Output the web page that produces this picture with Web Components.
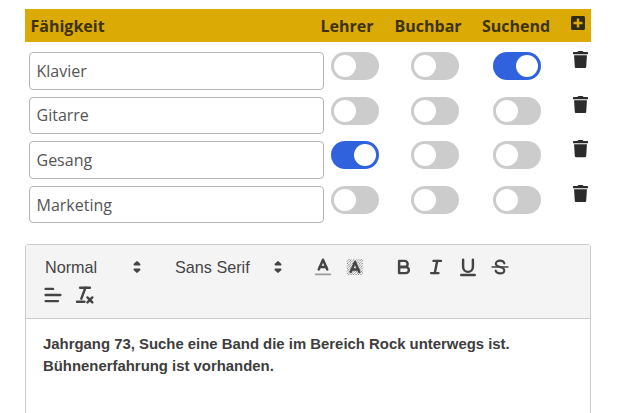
<!DOCTYPE html>
<html lang="de">
<head>
<meta charset="utf-8">
<title>Fähigkeiten</title>
<style>
    html, body {
        margin: 0;
        padding: 0;
        background: #fff;
        overflow: hidden;
    }
</style>
</head>
<body>
<skill-page>
    <skill-table>
        <skill-row name="Klavier" suchend></skill-row>
        <skill-row name="Gitarre"></skill-row>
        <skill-row name="Gesang" lehrer></skill-row>
        <skill-row name="Marketing"></skill-row>
    </skill-table>
    <rich-editor>
        <p>Jahrgang 73, Suche eine Band die im Bereich Rock unterwegs ist.</p>
        <p>Bühnenerfahrung ist vorhanden.</p>
    </rich-editor>
</skill-page>

<script>
class SkillPage extends HTMLElement {
    constructor() {
        super();
        this.attachShadow({mode: 'open'});
        this.shadowRoot.innerHTML = `
            <style>
            :host {
                display: block;
                height: 413px;
                overflow: hidden;
                padding: 9px 29px 0 25px;
                box-sizing: border-box;
            }
            </style>
            <slot></slot>
        `;
    }
}

class SkillTable extends HTMLElement {
    constructor() {
        super();
        this.attachShadow({mode: 'open'});
        this.shadowRoot.innerHTML = `
            <style>
            :host {
                display: block;
                font-family: "Open Sans", sans-serif;
            }
            .head {
                display: grid;
                grid-template-columns: 290px 74px 87.5px 87.5px 15px;
                align-items: center;
                height: 33px;
                padding-left: 5.5px;
                background: #dcaa04;
                color: #3d3210;
                font-size: 16px;
                font-weight: 700;
                white-space: nowrap;
            }
            .head svg {
                display: block;
                width: 14px;
                height: 16px;
                margin: -5px 0 0 1.5px;
                fill: #2f2a14;
            }
            .rows {
                display: flex;
                flex-direction: column;
                gap: 7.17px;
                padding: 10px 0 0 4px;
            }
            </style>
            <div class="head">
                <span>Fähigkeit</span>
                <span>Lehrer</span>
                <span>Buchbar</span>
                <span>Suchend</span>
                <svg viewBox="0 0 448 512"><path d="M400 32H48C21.5 32 0 53.5 0 80v352c0 26.5 21.5 48 48 48h352c26.5 0 48-21.5 48-48V80c0-26.5-21.5-48-48-48zm-32 252c0 6.6-5.4 12-12 12h-92v92c0 6.6-5.4 12-12 12h-56c-6.6 0-12-5.4-12-12v-92H92c-6.6 0-12-5.4-12-12v-56c0-6.6 5.4-12 12-12h92v-92c0-6.6 5.4-12 12-12h56c6.6 0 12 5.4 12 12v92h92c6.6 0 12 5.4 12 12v56z"/></svg>
            </div>
            <div class="rows"><slot></slot></div>
        `;
    }
}

class SkillRow extends HTMLElement {
    constructor() {
        super();
        this.attachShadow({mode: 'open'});
    }

    connectedCallback() {
        this.render();
    }

    render() {
        const on = (name) => this.hasAttribute(name) ? 'checked' : '';
        this.shadowRoot.innerHTML = `
            <style>
            :host {
                display: grid;
                grid-template-columns: 295px 55px 80px 81.5px 47.5px;
                height: 37.5px;
            }
            .name {
                box-sizing: border-box;
                height: 37.5px;
                border: 1.3px solid #b5b5b5;
                border-radius: 4px;
                padding-left: 6.5px;
                display: flex;
                align-items: center;
                color: #555;
                font-size: 16px;
            }
            toggle-switch {
                justify-self: end;
            }
            svg {
                justify-self: end;
                width: 15px;
                height: 17.2px;
                margin-top: -1px;
                fill: #2b2b2b;
            }
            </style>
            <div class="name">${this.getAttribute('name')}</div>
            <toggle-switch ${on('lehrer')}></toggle-switch>
            <toggle-switch ${on('buchbar')}></toggle-switch>
            <toggle-switch ${on('suchend')}></toggle-switch>
            <svg viewBox="0 0 448 512"><path d="M432 32H312l-9.4-18.7A24 24 0 0 0 281.1 0H166.8a23.72 23.72 0 0 0-21.4 13.3L136 32H16A16 16 0 0 0 0 48v32a16 16 0 0 0 16 16h416a16 16 0 0 0 16-16V48a16 16 0 0 0-16-16zM53.2 467a48 48 0 0 0 47.9 45h245.8a48 48 0 0 0 47.9-45L416 128H32z"/></svg>
        `;
    }
}

class ToggleSwitch extends HTMLElement {
    constructor() {
        super();
        this.attachShadow({mode: 'open'});
        this.shadowRoot.innerHTML = `
            <style>
            :host {
                display: flex;
                align-items: center;
                box-sizing: border-box;
                width: 48px;
                height: 28px;
                padding: 0 3px;
                border-radius: 14px;
                background: #ccc;
            }
            :host([checked]) {
                background: #2f62dc;
                justify-content: flex-end;
            }
            i {
                display: block;
                width: 22px;
                height: 22px;
                border-radius: 50%;
                background: #fff;
            }
            </style>
            <i></i>
        `;
    }
}

// diagonal hatch behind the background colour "A"
const hatchLines = () => {
    let lines = '';
    for (let s = 7; s <= 29; s += 2) {
        const x1 = Math.max(2.5, s - 15.5);
        const x2 = Math.min(15.5, s - 2.5);
        lines += `<line x1="${x1}" y1="${s - x1}" x2="${x2}" y2="${s - x2}"/>`;
    }
    return lines;
};

const QL_ICONS = {
    color: '<line x1="3" x2="15" y1="15" y2="15" stroke="#999" stroke-width="1.4"/><polyline points="5.5 11 9 3 12.5 11"/><line x1="11.63" x2="6.38" y1="9" y2="9"/>',
    background: `<g class="hatch">${hatchLines()}</g><polyline points="5.5 13 9 5 12.5 13"/><line x1="11.63" x2="6.38" y1="11" y2="11"/>`,
    bold: '<path d="M5,4H9.5A2.5,2.5,0,0,1,12,6.5v0A2.5,2.5,0,0,1,9.5,9H5V4Z"/><path d="M5,9h5.5A2.5,2.5,0,0,1,13,11.5v0A2.5,2.5,0,0,1,10.5,14H5V9Z"/>',
    italic: '<line x1="7" x2="13" y1="4" y2="4"/><line x1="5" x2="11" y1="14" y2="14"/><line x1="8" x2="10" y1="14" y2="4"/>',
    underline: '<path d="M5,3V9a4,4,0,0,0,4,4H9a4,4,0,0,0,4-4V3"/><rect class="solid" height="1" rx=".5" width="12" x="3" y="15"/>',
    strike: '<line stroke-width="1.2" x1="2.5" x2="15.5" y1="9" y2="9"/><path stroke-width="1.7" d="M12.6,6C12,4.4,10.7,3.8,9,3.8,7,3.8,5.6,4.8,5.6,6.3,5.6,7.6,6.6,8.4,9,9,11.4,9.6,12.5,10.4,12.5,11.8,12.5,13.3,11,14.2,9,14.2,7.2,14.2,5.9,13.5,5.4,12"/>',
    align: '<line x1="3" x2="15" y1="9" y2="9"/><line x1="3" x2="13" y1="14" y2="14"/><line x1="3" x2="9" y1="4" y2="4"/>',
    clean: '<line x1="5" x2="13" y1="3" y2="3"/><line x1="6" x2="9.35" y1="12" y2="3"/><line x1="11" x2="15" y1="11" y2="15"/><line x1="15" x2="11" y1="11" y2="15"/><rect class="solid" height="1" rx=".5" width="7" x="2" y="14"/>',
    arrows: '<polygon class="arrow" points="7 11 9 13 11 11 7 11"/><polygon class="arrow" points="7 7 9 5 11 7 7 7"/>',
};

class RichEditor extends HTMLElement {
    constructor() {
        super();
        this.attachShadow({mode: 'open'});
        const icon = (name) => `<button><svg viewBox="0 0 18 18">${QL_ICONS[name]}</svg></button>`;
        const picker = (label, width) => `
            <span class="picker" style="width:${width}px">${label}<svg viewBox="0 0 18 18">${QL_ICONS.arrows}</svg></span>`;
        this.shadowRoot.innerHTML = `
            <style>
            :host {
                display: block;
                margin-top: 21px;
                height: 200px;
                box-sizing: border-box;
                border: 1px solid #ccc;
                border-radius: 3px 3px 0 0;
                font-family: "Liberation Sans", Arial, sans-serif;
            }
            .toolbar {
                box-sizing: border-box;
                height: 74px;
                padding: 8px 0 0 11px;
                background: #f4f4f4;
                border-bottom: 1px solid #ccc;
                color: #444;
            }
            .line {
                display: flex;
                align-items: center;
                height: 28px;
            }
            button {
                display: block;
                flex: none;
                width: 32px;
                height: 28px;
                padding: 0;
                border: 0;
                background: none;
            }
            button svg {
                margin: 0 auto;
            }
            .picker {
                flex: none;
                display: flex;
                align-items: center;
                justify-content: space-between;
                box-sizing: border-box;
                padding-left: 8px;
                font-size: 16.2px;
            }
            svg {
                display: block;
                width: 22px;
                height: 22px;
                fill: none;
                stroke: #444;
                stroke-width: 2;
                stroke-linecap: round;
                stroke-linejoin: round;
            }
            svg .solid {
                fill: #444;
                stroke-width: 1;
            }
            svg .arrow {
                fill: #444;
                stroke-width: 1.7;
            }
            svg .hatch line {
                stroke: #555;
                stroke-width: .7;
                stroke-linecap: butt;
                stroke-dasharray: 1.2 .6;
            }
            .sp1 { width: 19px; flex: none; }
            .sp2 { width: 17.5px; flex: none; }
            .content {
                padding: 14px 17px;
                color: #3d3d3d;
                font-size: 14.9px;
                font-weight: 700;
                line-height: 22px;
            }
            ::slotted(p) {
                margin: 0;
            }
            </style>
            <div class="toolbar">
                <div class="line">
                    ${picker('Normal', 111)}
                    <span class="sp1"></span>
                    ${picker('Sans Serif', 122)}
                    <span class="sp2"></span>
                    ${icon('color')}${icon('background')}
                    <span class="sp2"></span>
                    ${icon('bold')}${icon('italic')}${icon('underline')}${icon('strike')}
                </div>
                <div class="line">
                    ${icon('align')}${icon('clean')}
                </div>
            </div>
            <div class="content"><slot></slot></div>
        `;
    }
}

customElements.define('skill-page', SkillPage);
customElements.define('skill-table', SkillTable);
customElements.define('skill-row', SkillRow);
customElements.define('toggle-switch', ToggleSwitch);
customElements.define('rich-editor', RichEditor);
</script>
</body>
</html>
